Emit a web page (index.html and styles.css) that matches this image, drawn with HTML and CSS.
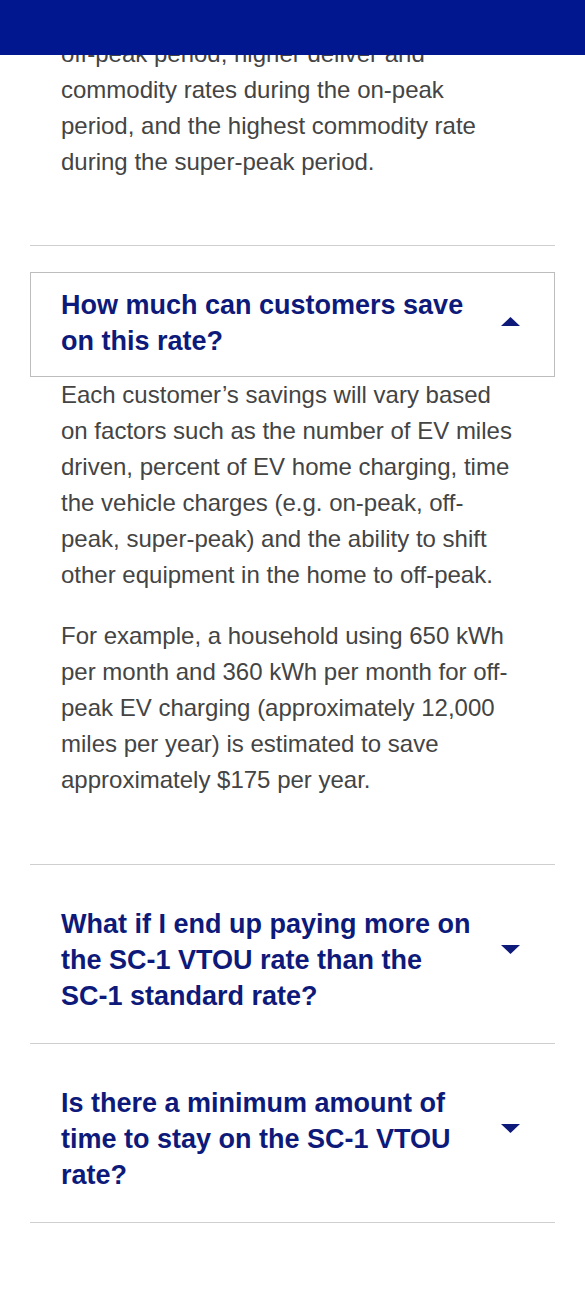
FILE: index.html
```html
<!DOCTYPE html>
<html lang="en">
  <head>
    <meta charset="UTF-8" />
    <meta name="viewport" content="width=device-width, initial-scale=1.0" />
    <title>SC-1 VTOU rate – FAQ</title>
    <link rel="stylesheet" href="styles.css">
  </head>
  <body>
    <!-- Sticky header bar -->
    <div class="topbar"></div>

    <div class="faq">
      <!-- Tail of the previous answer -->
      <div class="faq-answer faq-answer--intro">
        <p>off-peak period, higher deliver and commodity rates during the on-peak period, and the highest commodity rate during the super-peak period.</p>
      </div>

      <!-- Open item -->
      <div class="faq-item faq-item--open">
        <button class="faq-question" type="button">
          <span class="faq-title">How much can customers save on this rate?</span>
          <svg class="faq-caret" width="19" height="9" viewBox="0 0 19 9"><polygon points="0,9 9.5,0 19,9" /></svg>
        </button>
        <div class="faq-answer">
          <p>Each customer’s savings will vary based on factors such as the number of EV miles driven, percent of EV home charging, time the vehicle charges (e.g. on-peak, off-peak, super-peak) and the ability to shift other equipment in the home to off-peak.</p>
          <p>For example, a household using 650 kWh per month and 360 kWh per month for off-peak EV charging (approximately 12,000 miles per year) is estimated to save approximately $175 per year.</p>
        </div>
      </div>

      <!-- Closed items -->
      <div class="faq-item">
        <button class="faq-question" type="button">
          <span class="faq-title">What if I end up paying more on the SC-&#8288;1 VTOU rate than the SC-&#8288;1 standard rate?</span>
          <svg class="faq-caret" width="19" height="9" viewBox="0 0 19 9"><polygon points="0,0 19,0 9.5,9" /></svg>
        </button>
      </div>

      <div class="faq-item faq-item--last">
        <button class="faq-question" type="button">
          <span class="faq-title">Is there a minimum amount of time to stay on the SC-&#8288;1 VTOU rate?</span>
          <svg class="faq-caret" width="19" height="9" viewBox="0 0 19 9"><polygon points="0,0 19,0 9.5,9" /></svg>
        </button>
      </div>
    </div>
  </body>
</html>
```

FILE: styles.css
```css
body {
  margin: 0;
  font-family: "Liberation Sans", Arial, Helvetica, sans-serif;
  color: #444;
  background: #fff;
}
.topbar {
  position: fixed;
  top: 0;
  left: 0;
  right: 0;
  height: 55px;
  background: #00178f;
  z-index: 10;
}
.faq {
  padding: 0 30px 60px;
}
.faq-answer {
  padding: 0 38px 66px 31px;
  font-size: 24px;
  line-height: 36px;
}
.faq-answer p {
  margin: 0 0 25px;
}
.faq-answer p:last-child {
  margin-bottom: 0;
}
.faq-answer--intro {
  padding-top: 36px;
  padding-bottom: 65px;
}
.faq-item {
  border-top: 1px solid #cfcfcf;
}
.faq-item--last {
  border-bottom: 1px solid #cfcfcf;
}
.faq-question {
  display: flex;
  align-items: center;
  gap: 16px;
  width: 100%;
  margin: 0;
  padding: 40px 34px 28px 30px;
  border: 1px solid transparent;
  background: none;
  text-align: left;
  font-family: inherit;
  cursor: pointer;
}
.faq-title {
  flex: 1;
  font-size: 27px;
  line-height: 36px;
  font-weight: bold;
  color: #0d1a7a;
}
.faq-caret {
  flex: none;
  fill: #0d1a7a;
  margin-bottom: 22px;
}
.faq-item--open {
  padding-top: 26px;
}
.faq-item--open .faq-question {
  border-color: #bdbdbd;
  padding-top: 14px;
  padding-bottom: 17px;
}
.faq-item--open .faq-caret {
  margin-bottom: 4px;
}
```
